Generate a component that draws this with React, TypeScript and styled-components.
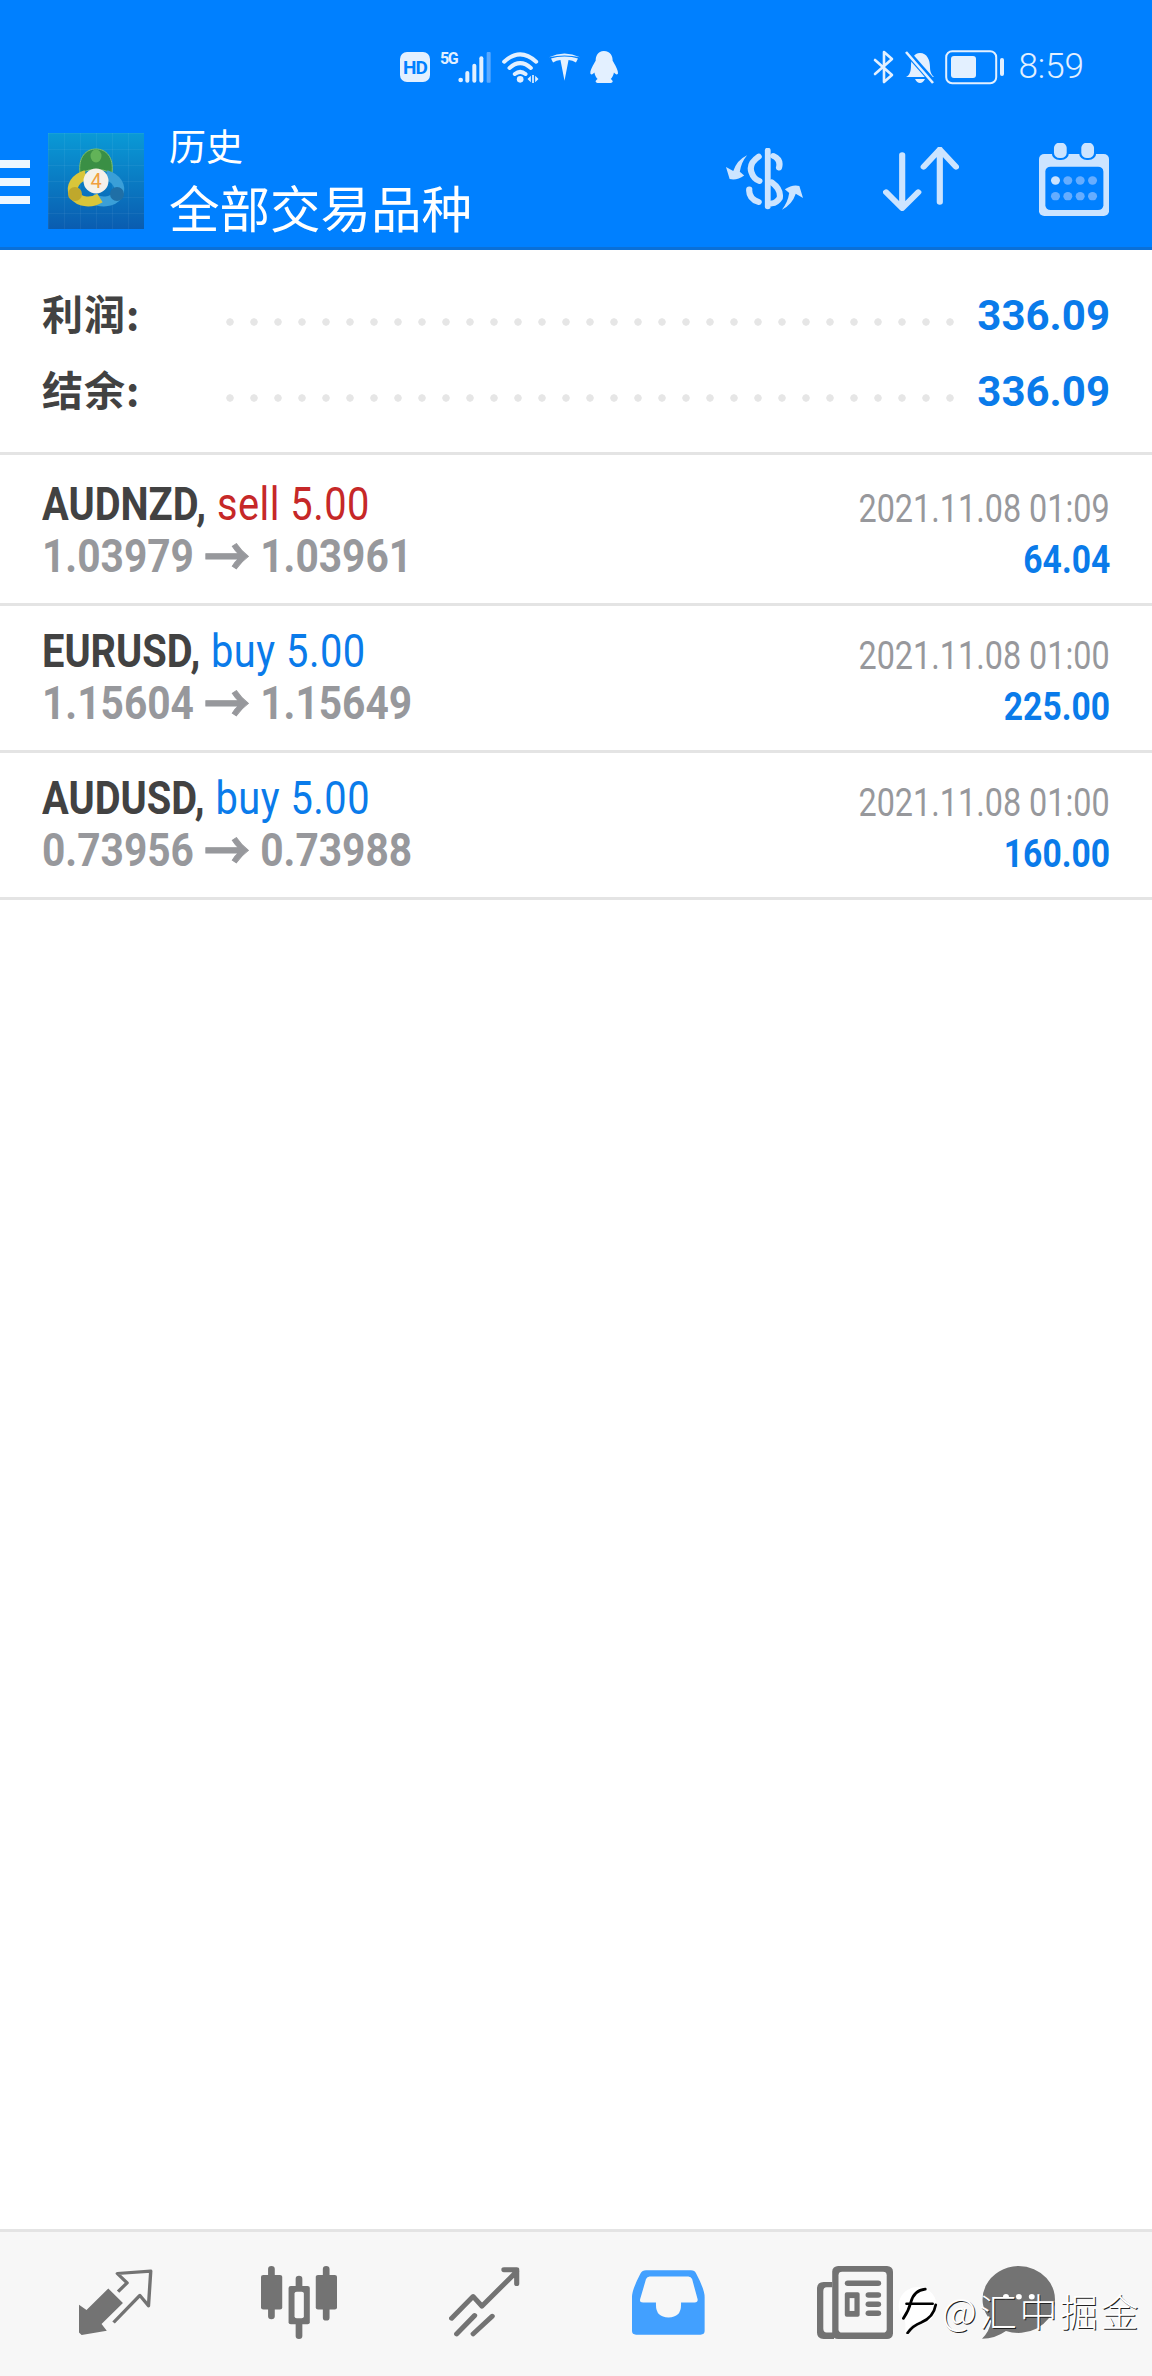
import React from 'react';
import styled, { createGlobalStyle } from 'styled-components';

const BLUE = '#0080ff';
const PALE = '#cce4ff';
const STATUS = '#e3f0ff';
const GREY_ICON = '#737373';
const NAV_BG = '#f7f7f7';

const trades = [
  { symbol: 'AUDNZD', side: 'sell', open: '1.03979', close: '1.03961', time: '2021.11.08 01:09', profit: '64.04' },
  { symbol: 'EURUSD', side: 'buy', open: '1.15604', close: '1.15649', time: '2021.11.08 01:00', profit: '225.00' },
  { symbol: 'AUDUSD', side: 'buy', open: '0.73956', close: '0.73988', time: '2021.11.08 01:00', profit: '160.00' },
];

const App = () => {
  return (
    <Page>
      <GlobalStyle />
      <Header>
        <StatusBar>
          <HdBadge>HD</HdBadge>
          <Signal>
            <FiveG>5G</FiveG>
            <svg width="33" height="31" viewBox="233 65 97 93">
              <circle cx="240" cy="149" r="7" fill={STATUS} />
              <rect x="254" y="122" width="12" height="35" rx="6" fill={STATUS} />
              <rect x="275" y="100" width="12" height="57" rx="6" fill={STATUS} />
              <rect x="296" y="78" width="12" height="79" rx="6" fill={STATUS} />
              <rect x="318" y="65" width="12" height="92" rx="3" fill="#5aa9ff" />
            </svg>
          </Signal>
          <svg width="37" height="31" viewBox="360 65 110 93">
            <path d="M366 94 Q414 50 462 94 M382 113 Q414 84 446 113 M398 131 Q414 118 430 131" fill="none" stroke={STATUS} strokeWidth="12" strokeLinecap="round" />
            <circle cx="414" cy="147" r="10" fill={STATUS} />
            <path d="M446 136 L436 146 L446 156Z M459 136 L469 146 L459 156Z" fill={STATUS} />
            <rect x="450" y="134" width="5" height="24" fill={STATUS} />
          </svg>
          <svg width="31" height="28" viewBox="498 68 92 82">
            <path d="M498 80 Q544 58 590 80 Q544 70 498 80Z M504 84 Q520 78 544 78 Q568 78 584 84 L578 96 Q568 88 556 88 L544 150 L532 88 Q520 88 510 96Z" fill={STATUS} />
          </svg>
          <svg width="28" height="32" viewBox="627 62 85 98">
            <path d="M669 62 C650 62 644 78 644 92 C636 106 626 122 628 132 C632 136 636 132 640 128 C642 138 646 144 650 148 C644 152 640 158 650 160 L690 160 C700 158 696 152 690 148 C694 144 698 138 700 128 C704 132 708 136 712 132 C714 122 704 106 696 92 C696 78 690 62 669 62Z" fill={STATUS} />
          </svg>
          <StatusRight>
            <svg width="22" height="34" viewBox="0 0 22 34">
              <path d="M2 10 L19 25 L11 32 V2 L19 9 L2 24" fill="none" stroke={STATUS} strokeWidth="2.6" strokeLinejoin="round" strokeLinecap="round" />
            </svg>
            <svg width="30" height="34" viewBox="0 0 30 34">
              <path d="M15 3 C22 3 25 10 25 17 C25 23 27 25 29 27 H1 C5 25 6 21 6 15 C6 9 9 3 15 3Z" fill={STATUS} />
              <path d="M10 29 H20 Q18 33 15 33 Q12 33 10 29Z" fill={STATUS} />
              <path d="M1 1 L29 33" stroke={BLUE} strokeWidth="6" />
              <path d="M1 2 L28 33" stroke={STATUS} strokeWidth="2.6" />
            </svg>
            <svg width="60" height="35" viewBox="0 0 60 35">
              <rect x="1.2" y="1.2" width="50" height="32" rx="6" fill="none" stroke={STATUS} strokeWidth="2" />
              <rect x="6" y="6" width="25" height="22" rx="3" fill={STATUS} />
              <rect x="55" y="8" width="4" height="18" rx="2" fill={STATUS} />
            </svg>
            <Clock>8:59</Clock>
          </StatusRight>
        </StatusBar>
        <TitleRow>
          <Hamburger>
            <HamburgerBar />
            <HamburgerBar />
            <HamburgerBar />
          </Hamburger>
          <AppLogo viewBox="0 0 96 96">
            <defs>
              <linearGradient id="logoBg" x1="0" y1="0" x2="0" y2="1">
                <stop offset="0" stopColor="#0a9ad6" />
                <stop offset="1" stopColor="#0a5cb0" />
              </linearGradient>
              <pattern id="logoGrid" width="16" height="16" patternUnits="userSpaceOnUse">
                <path d="M16 0 H0 V16" fill="none" stroke="#ffffff" strokeOpacity="0.1" strokeWidth="1" />
              </pattern>
            </defs>
            <rect width="96" height="96" fill="url(#logoBg)" />
            <rect width="96" height="96" fill="url(#logoGrid)" />
            <path d="M32 40 C30 24 38 16 48 16 C58 16 66 24 64 40 L55 37 H41Z" fill="#3a8f45" stroke="#7fbf6a" strokeWidth="1" />
            <ellipse cx="48" cy="23" rx="5.5" ry="6.5" fill="#62b358" />
            <path d="M58 42 C68 45 74 53 70 62 C64 70 52 70 44 65" fill="none" stroke="#3a9fd8" strokeWidth="10" />
            <circle cx="69" cy="61" r="7" fill="#1f6fa6" />
            <path d="M38 42 C28 45 22 53 26 62 C32 70 44 70 52 65" fill="none" stroke="#d9c63a" strokeWidth="10" />
            <circle cx="27" cy="61" r="7" fill="#bfa82c" />
            <circle cx="48" cy="48" r="12.5" fill="#f4f1ea" />
            <LogoDigit x="48" y="55">4</LogoDigit>
          </AppLogo>
          <Titles>
            <Overline>历史</Overline>
            <Heading>全部交易品种</Heading>
          </Titles>
          <Toolbar>
            <svg width="77" height="62" viewBox="400 445 212 180" preserveAspectRatio="none">
              <path d="M515 452 V615" stroke={PALE} strokeWidth="16" strokeLinecap="round" />
              <path d="M530 468 Q552 478 546 502 M490 470 Q462 490 470 515 Q476 535 492 541 M526 545 Q552 565 548 590 Q540 604 526 606 M464 565 Q462 592 490 602" fill="none" stroke={PALE} strokeWidth="17" strokeLinecap="round" />
              <path d="M458 466 Q430 480 420 512 L400 500 L410 535 Q430 540 450 525 L438 514 Q442 486 458 466Z" fill={PALE} />
              <path d="M554 624 Q582 610 592 578 L612 590 L602 555 Q582 550 562 565 L574 576 Q570 604 554 624Z" fill={PALE} />
            </svg>
            <svg width="76" height="64" viewBox="832 445 198 187" preserveAspectRatio="none">
              <path d="M882 468 V622 M840 577 L882 624 L924 577 M980 606 V452 M938 503 L980 452 L1022 503" fill="none" stroke={PALE} strokeWidth="16" strokeLinecap="round" strokeLinejoin="round" />
            </svg>
            <svg width="70" height="73" viewBox="1263 430 187 210" preserveAspectRatio="none">
              <rect x="1263" y="462" width="187" height="178" rx="14" fill={PALE} />
              <rect x="1280" y="498" width="155" height="125" rx="14" fill={BLUE} />
              <rect x="1300" y="426" width="40" height="50" rx="18" fill={PALE} stroke={BLUE} strokeWidth="6" />
              <rect x="1373" y="426" width="40" height="50" rx="18" fill={PALE} stroke={BLUE} strokeWidth="6" />
              {[538, 583].map((cy) =>
                [1307, 1340, 1373, 1406].map((cx) => (
                  <circle key={cx + '-' + cy} cx={cx} cy={cy} r="12" fill={cx === 1307 && cy === 538 ? PALE : '#66adff'} />
                )),
              )}
            </svg>
          </Toolbar>
        </TitleRow>
      </Header>

      <Summary>
        <SummaryRow>
          <SummaryLabel>利润:</SummaryLabel>
          <Leader />
          <SummaryValue>336.09</SummaryValue>
        </SummaryRow>
        <SummaryRow>
          <SummaryLabel>结余:</SummaryLabel>
          <Leader />
          <SummaryValue>336.09</SummaryValue>
        </SummaryRow>
      </Summary>

      {trades.map((t) => (
        <TradeRow key={t.symbol}>
          <TradeLeft>
            <TradeTitle>
              <Symbol>{t.symbol},</Symbol> <Side $sell={t.side === 'sell'}>{t.side} 5.00</Side>
            </TradeTitle>
            <Prices>
              {t.open} <PriceArrow>→</PriceArrow> {t.close}
            </Prices>
          </TradeLeft>
          <TradeRight>
            <TradeTime>{t.time}</TradeTime>
            <Profit>{t.profit}</Profit>
          </TradeRight>
        </TradeRow>
      ))}

      <Spacer />

      <BottomNav>
        <NavIcon $gap={79}>
          <svg width="74" height="66" viewBox="218 182 197 190" preserveAspectRatio="none">
            <path d="M218 285 L238 300 L296 238 L335 280 L278 340 L292 360 L225 372 L218 365Z" fill={GREY_ICON} />
            <path d="M322 247 L346 222 L320 195 L409 188 L403 288 L380 258 L310 336" fill="none" stroke={GREY_ICON} strokeWidth="9" strokeLinejoin="round" />
          </svg>
        </NavIcon>
        <NavIcon $gap={108}>
          <svg width="76" height="73" viewBox="713 165 204 222" preserveAspectRatio="none">
            <path d="M741 174 V318 M888 174 V322 M815 204 V378" stroke={GREY_ICON} strokeWidth="18" strokeLinecap="round" />
            <rect x="713" y="192" width="57" height="105" rx="6" fill={GREY_ICON} />
            <rect x="860" y="192" width="57" height="105" rx="6" fill={GREY_ICON} />
            <rect x="787" y="226" width="57" height="116" rx="6" fill={GREY_ICON} />
            <rect x="803" y="243" width="25" height="81" rx="6" fill={NAV_BG} />
          </svg>
        </NavIcon>
        <NavIcon $gap={112}>
          <svg width="71" height="70" viewBox="1220 172 194 202" preserveAspectRatio="none">
            <path d="M1227 320 L1286 257 L1310 285 L1405 185 M1370 180 H1405 V220 M1241 365 L1290 312 M1286 365 L1338 314" fill="none" stroke={GREY_ICON} strokeWidth="14" strokeLinecap="round" strokeLinejoin="round" />
          </svg>
        </NavIcon>
        <NavIcon $gap={112}>
          <svg width="73" height="65" viewBox="152 172 198 200" preserveAspectRatio="none">
            <path d="M190 173 H312 Q322 173 326 183 Q349 232 349 255 V360 Q349 371 338 371 H163 Q152 371 152 360 V255 Q152 232 175 183 Q180 173 190 173Z" fill="#42a0ff" />
            <path d="M200 192 H305 Q312 192 315 200 L330 262 Q331 272 322 272 H285 V280 Q285 318 251 318 Q217 318 217 280 V272 H182 Q172 272 174 262 L190 200 Q193 192 200 192Z" fill={NAV_BG} />
          </svg>
        </NavIcon>
        <NavIcon $gap={112}>
          <svg width="76" height="73" viewBox="654 165 205 216" preserveAspectRatio="none">
            <rect x="695" y="165" width="164" height="216" rx="16" fill={GREY_ICON} />
            <rect x="712" y="182" width="130" height="180" rx="10" fill={NAV_BG} />
            <path d="M695 212 H672 Q654 212 654 232 V362 Q654 381 672 381 H700 V362 H680 Q671 362 671 350 V240 Q671 228 680 228 H695Z" fill={GREY_ICON} />
            <rect x="729" y="208" width="98" height="16" rx="8" fill={GREY_ICON} />
            <rect x="729" y="243" width="40" height="72" rx="5" fill={GREY_ICON} />
            <rect x="742" y="260" width="13" height="38" fill={NAV_BG} />
            <rect x="785" y="243" width="42" height="16" rx="8" fill={GREY_ICON} />
            <rect x="785" y="270" width="42" height="16" rx="8" fill={GREY_ICON} />
            <rect x="785" y="297" width="42" height="16" rx="8" fill={GREY_ICON} />
          </svg>
        </NavIcon>
        <NavIcon $gap={89}>
          <svg width="73" height="73" viewBox="1105 165 198 216" preserveAspectRatio="none">
            <path d="M1204 165 A99 99 0 1 1 1170 357 Q1140 380 1105 380 Q1125 360 1130 328 A99 99 0 0 1 1204 165Z" fill={GREY_ICON} />
            <circle cx="1170" cy="256" r="8" fill="#ffffff" />
            <circle cx="1205" cy="256" r="8" fill="#ffffff" />
            <circle cx="1240" cy="256" r="8" fill="#ffffff" />
          </svg>
        </NavIcon>
        <Watermark>
          <svg width="40" height="48" viewBox="0 0 38 46">
            <path d="M19 1 A18 18 0 1 1 13 36 Q10 42 6 45 Q8 38 6 32 A18 18 0 0 1 19 1Z" fill="#ffffff" />
            <path d="M26 3 Q15 4 12 16 Q10 24 5 31 M8 17 H33 M36 18 Q34 30 22 35 Q14 38 9 45" fill="none" stroke="#000000" strokeWidth="2.6" strokeLinecap="round" />
          </svg>
          <WatermarkText>@汇中掘金</WatermarkText>
        </Watermark>
      </BottomNav>
    </Page>
  );
};

export default App;

const GlobalStyle = createGlobalStyle`
  html, body {
    margin: 0;
    padding: 0;
    background: #fff;
  }
  body {
    font-family: Roboto, "Noto Sans CJK SC", sans-serif;
  }
`;

const Page = styled.div`
  width: 1152px;
  height: 2376px;
  display: flex;
  flex-direction: column;
  overflow: hidden;
  background: #fff;
`;

const Header = styled.header`
  height: 250px;
  flex: none;
  background: ${BLUE};
  border-bottom: 3px solid #0a70d8;
  box-sizing: border-box;
  display: flex;
  flex-direction: column;
`;

const StatusBar = styled.div`
  height: 132px;
  flex: none;
  padding: 2px 68px 0 400px;
  box-sizing: border-box;
  display: flex;
  align-items: center;
  gap: 10px;
`;

const HdBadge = styled.span`
  width: 30px;
  height: 30px;
  border-radius: 7px;
  background: ${STATUS};
  color: ${BLUE};
  font-size: 19px;
  font-weight: 700;
  letter-spacing: -1px;
  display: flex;
  align-items: center;
  justify-content: center;
`;

const Signal = styled.div`
  display: flex;
  align-items: flex-end;
  gap: 1px;
  margin-right: 1px;
`;

const FiveG = styled.span`
  color: ${STATUS};
  font-size: 16px;
  font-weight: 700;
  line-height: 16px;
  margin-bottom: 16px;
  letter-spacing: -1.5px;
`;

const StatusRight = styled.div`
  margin-left: auto;
  display: flex;
  align-items: center;
  gap: 10px;
`;

const Clock = styled.span`
  margin-left: 3px;
  color: ${STATUS};
  font-size: 35px;
  font-weight: 300;
  line-height: 36px;
`;

const TitleRow = styled.div`
  height: 115px;
  flex: none;
  padding: 0 43px 18px 0;
  box-sizing: border-box;
  display: flex;
  align-items: center;
`;

const Hamburger = styled.div`
  width: 30px;
  display: flex;
  flex-direction: column;
  gap: 10px;
  margin-top: 2px;
`;

const HamburgerBar = styled.span`
  height: 8px;
  background: #eef7ff;
`;

const AppLogo = styled.svg`
  width: 96px;
  height: 96px;
  margin-left: 18px;
  flex: none;
`;

const LogoDigit = styled.text`
  fill: #f0a040;
  font-size: 20px;
  text-anchor: middle;
`;

const Titles = styled.div`
  margin-left: 25px;
  color: #fff;
  font-family: "Noto Sans CJK SC", sans-serif;
  display: flex;
  flex-direction: column;
`;

const Overline = styled.div`
  font-size: 37px;
  line-height: 50px;
`;

const Heading = styled.div`
  font-size: 50.5px;
  line-height: 72px;
`;

const Toolbar = styled.div`
  margin-left: auto;
  margin-top: -3px;
  display: flex;
  align-items: center;
  gap: 80px;
`;

const Summary = styled.section`
  height: 205px;
  flex: none;
  padding: 27px 42px 0;
  box-sizing: border-box;
  border-bottom: 3px solid #e4e4e4;
`;

const SummaryRow = styled.div`
  height: 76px;
  display: flex;
  align-items: center;
`;

const SummaryLabel = styled.span`
  width: 176px;
  flex: none;
  margin-top: -6px;
  color: #424242;
  font-family: "Noto Sans CJK SC", sans-serif;
  font-size: 41px;
  font-weight: 700;
  letter-spacing: 1px;
`;

const Leader = styled.span`
  flex: 1;
  height: 8px;
  margin: 14px 16px 0 0;
  background: radial-gradient(circle, #e6e6e6 3.4px, transparent 4px) 0 0 / 24px 8px repeat-x;
`;

const SummaryValue = styled.span`
  color: #0a7bea;
  font-size: 42px;
  font-weight: 700;
`;

const TradeRow = styled.article`
  height: 147px;
  flex: none;
  padding: 20px 42px 0;
  box-sizing: border-box;
  border-bottom: 3px solid #e4e4e4;
  display: flex;
  justify-content: space-between;

  &:nth-child(3) {
    height: 151px;
    padding-top: 24px;
  }
`;

const TradeLeft = styled.div`
  display: flex;
  flex-direction: column;
  white-space: nowrap;
`;

const TradeTitle = styled.div`
  font-size: 46px;
  line-height: 50px;
  transform: scaleX(0.865);
  transform-origin: left center;
`;

const Symbol = styled.span`
  color: #424242;
  font-weight: 700;
`;

const Side = styled.span<{ $sell: boolean }>`
  color: ${(p) => (p.$sell ? '#c62828' : '#0a7bea')};
  letter-spacing: 0.6px;
  margin-left: 1px;
`;

const Prices = styled.div`
  margin-top: 2px;
  color: #97989c;
  font-size: 46px;
  font-weight: 700;
  line-height: 50px;
  transform: scaleX(0.885);
  transform-origin: left center;
`;

const PriceArrow = styled.span`
  font-size: 52px;
  line-height: 0;
  vertical-align: -4px;
  -webkit-text-stroke: 1px #97989c;
`;

const TradeRight = styled.div`
  padding-top: 4px;
  display: flex;
  flex-direction: column;
  align-items: flex-end;
  white-space: nowrap;
`;

const TradeTime = styled.div`
  color: #97989c;
  font-size: 39px;
  line-height: 52px;
  transform: scaleX(0.83);
  transform-origin: right center;
`;

const Profit = styled.div`
  color: #0a7bea;
  font-size: 38px;
  font-weight: 700;
  line-height: 50px;
  transform: scaleX(0.885);
  transform-origin: right center;
`;

const Spacer = styled.div`
  flex: 1;
`;

const BottomNav = styled.nav`
  height: 147px;
  flex: none;
  position: relative;
  box-sizing: border-box;
  border-top: 3px solid #e4e4e4;
  background: ${NAV_BG};
  padding-bottom: 4px;
  display: flex;
  align-items: center;
`;

const NavIcon = styled.div<{ $gap: number }>`
  margin-left: ${(p) => p.$gap}px;
  display: flex;
`;

const Watermark = styled.div`
  position: absolute;
  left: 898px;
  top: 54px;
  display: flex;
  align-items: center;
  gap: 4px;
`;

const WatermarkText = styled.span`
  color: #fff;
  font-family: "Noto Sans CJK SC", sans-serif;
  font-size: 38px;
  font-weight: 300;
  line-height: 46px;
  letter-spacing: 2.5px;
  white-space: nowrap;
  text-shadow: 1px 1px 0 #222;
`;
